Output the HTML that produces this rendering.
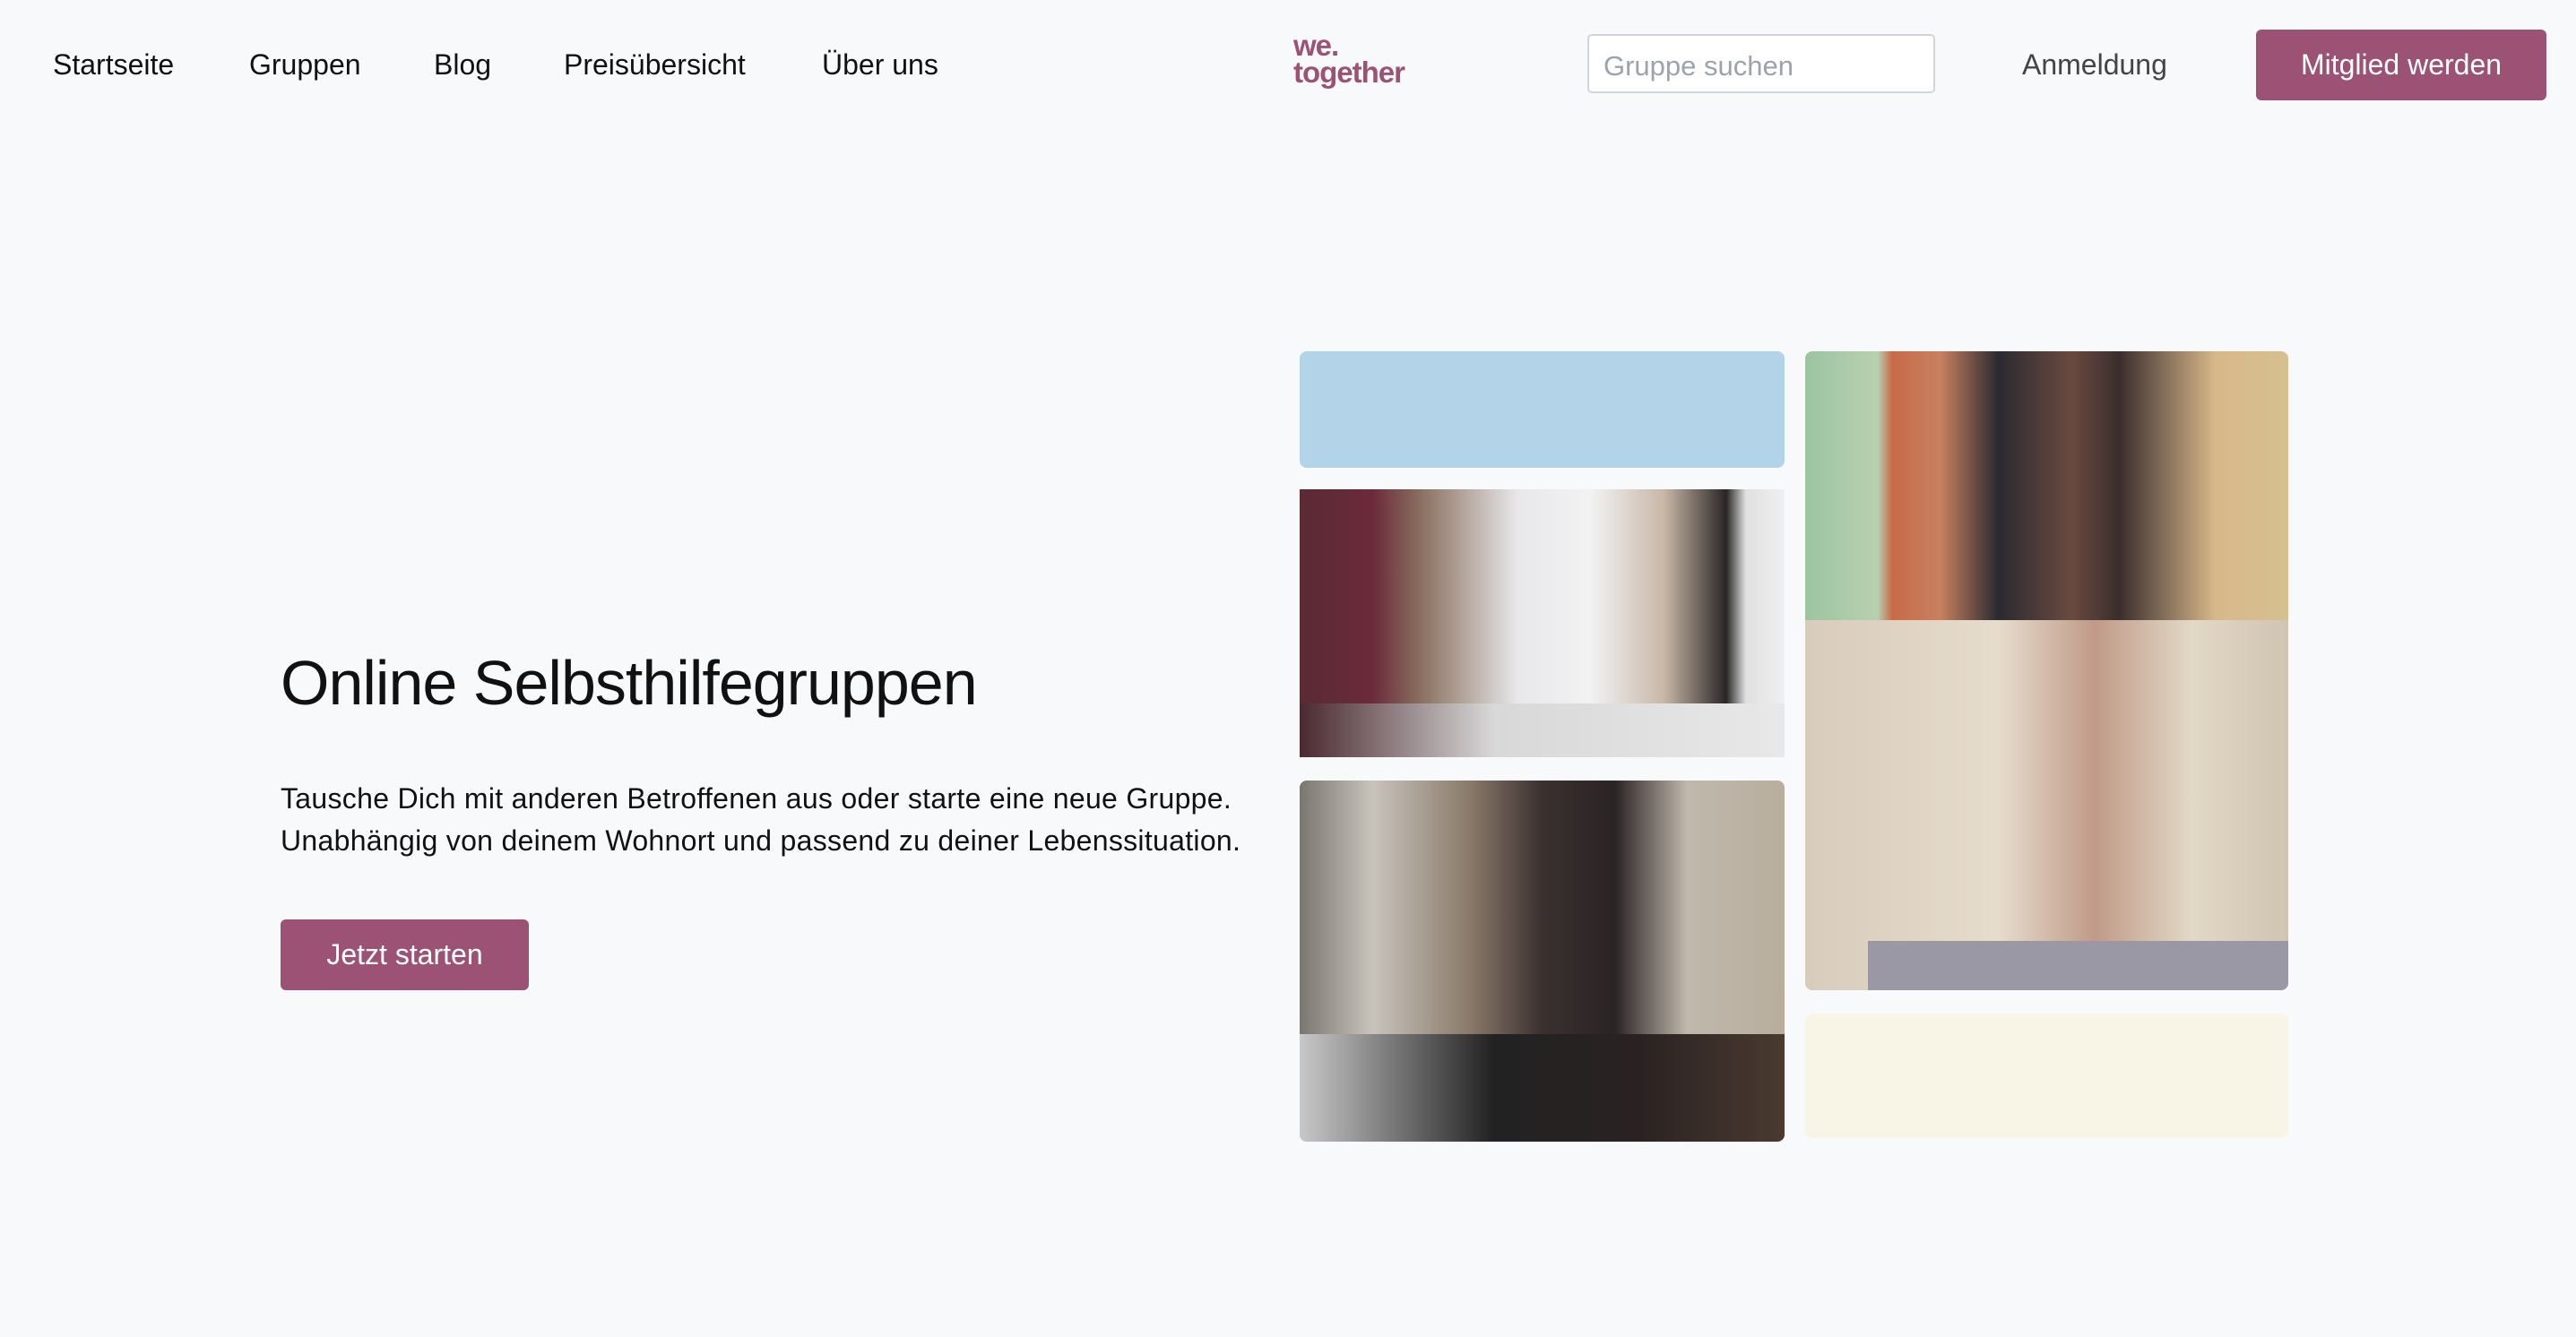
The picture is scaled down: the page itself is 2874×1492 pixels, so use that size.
<!DOCTYPE html>
<html><head><meta charset="utf-8"><style>
*{margin:0;padding:0;box-sizing:border-box}
body{width:2874px;height:1492px;background:#f8f9fb;font-family:"Liberation Sans",sans-serif;position:relative;overflow:hidden;color:#111}
.a{position:absolute;white-space:nowrap}
.nav{font-size:32px;top:54px;color:#111}
.btn{background:#9c5275;color:#fff;border-radius:6px;display:flex;align-items:center;justify-content:center;font-size:32px}
.img{position:absolute;border-radius:8px;overflow:hidden}
</style></head><body>
<div class="a nav" style="left:59px">Startseite</div>
<div class="a nav" style="left:278px">Gruppen</div>
<div class="a nav" style="left:484px">Blog</div>
<div class="a nav" style="left:629px">Preisübersicht</div>
<div class="a nav" style="left:917px">Über uns</div>
<div class="a" style="left:1443px;top:36px;font-size:33px;font-weight:bold;color:#9c5275;line-height:30px;letter-spacing:-1px">we.<br>together</div>
<div class="a" style="left:1771px;top:38px;width:388px;height:66px;background:#fff;border:2px solid #d1d5db;border-radius:5px;font-size:31px;color:#9ca3af;padding:16px 0 0 16px">Gruppe suchen</div>
<div class="a" style="left:2256px;top:54px;font-size:32px;color:#444">Anmeldung</div>
<div class="a btn" style="left:2517px;top:33px;width:324px;height:79px">Mitglied werden</div>

<div class="a" style="left:313px;top:722px;font-size:70px;letter-spacing:-1px;color:#111">Online Selbsthilfegruppen</div>
<div class="a" style="left:313px;top:868px;font-size:32px;line-height:47px;color:#111;letter-spacing:0.3px">Tausche Dich mit anderen Betroffenen aus oder starte eine neue Gruppe.<br>Unabhängig von deinem Wohnort und passend zu deiner Lebenssituation.</div>
<div class="a btn" style="left:313px;top:1026px;width:277px;height:79px">Jetzt starten</div>

<div class="img" style="left:1450px;top:392px;width:541px;height:130px;background:#b3d4e8"></div>
<div class="img" style="left:1450px;top:546px;width:541px;height:299px;border-radius:0;background:linear-gradient(90deg,#5a2a35 0%,#6b2a3a 15%,#8a7060 25%,#e8e8ea 45%,#f2f2f3 60%,#c9b8a8 75%,#2a2626 88%,#e0e0e0 92%,#f0f0f0 100%)">
<div style="position:absolute;left:0;bottom:0;width:100%;height:60px;background:linear-gradient(90deg,#4a2a30,#d8d8d8 40%,#e8e8e8)"></div></div>
<div class="img" style="left:1450px;top:871px;width:541px;height:403px;background:linear-gradient(90deg,#7a7670 0%,#c8c4bc 15%,#8a7a6a 35%,#3a3030 50%,#2a2424 65%,#c0b8ac 80%,#b8ae9e 100%)">
<div style="position:absolute;left:0;bottom:0;width:100%;height:120px;background:linear-gradient(90deg,#c8c8c8,#222 40%,#2a2222 70%,#4a3a30)"></div></div>
<div class="img" style="left:2014px;top:392px;width:539px;height:713px;background:linear-gradient(90deg,#9cc4a0 0%,#b8d0b0 15%,#c86a48 18%,#c88060 28%,#2a2a30 40%,#6a4a40 55%,#3a2e2e 65%,#d8b88a 85%,#d6c090 100%)">
<div style="position:absolute;left:0;top:300px;width:100%;height:413px;background:linear-gradient(90deg,#d8ccbc,#e6dccc 40%,#c09a88 60%,#e2d8c6 80%,#d0c4b2)"></div>
<div style="position:absolute;left:70px;bottom:0;width:469px;height:55px;background:#9a98a4"></div></div>
<div class="img" style="left:2014px;top:1131px;width:539px;height:139px;background:#f8f5e7"></div>
</body></html>
